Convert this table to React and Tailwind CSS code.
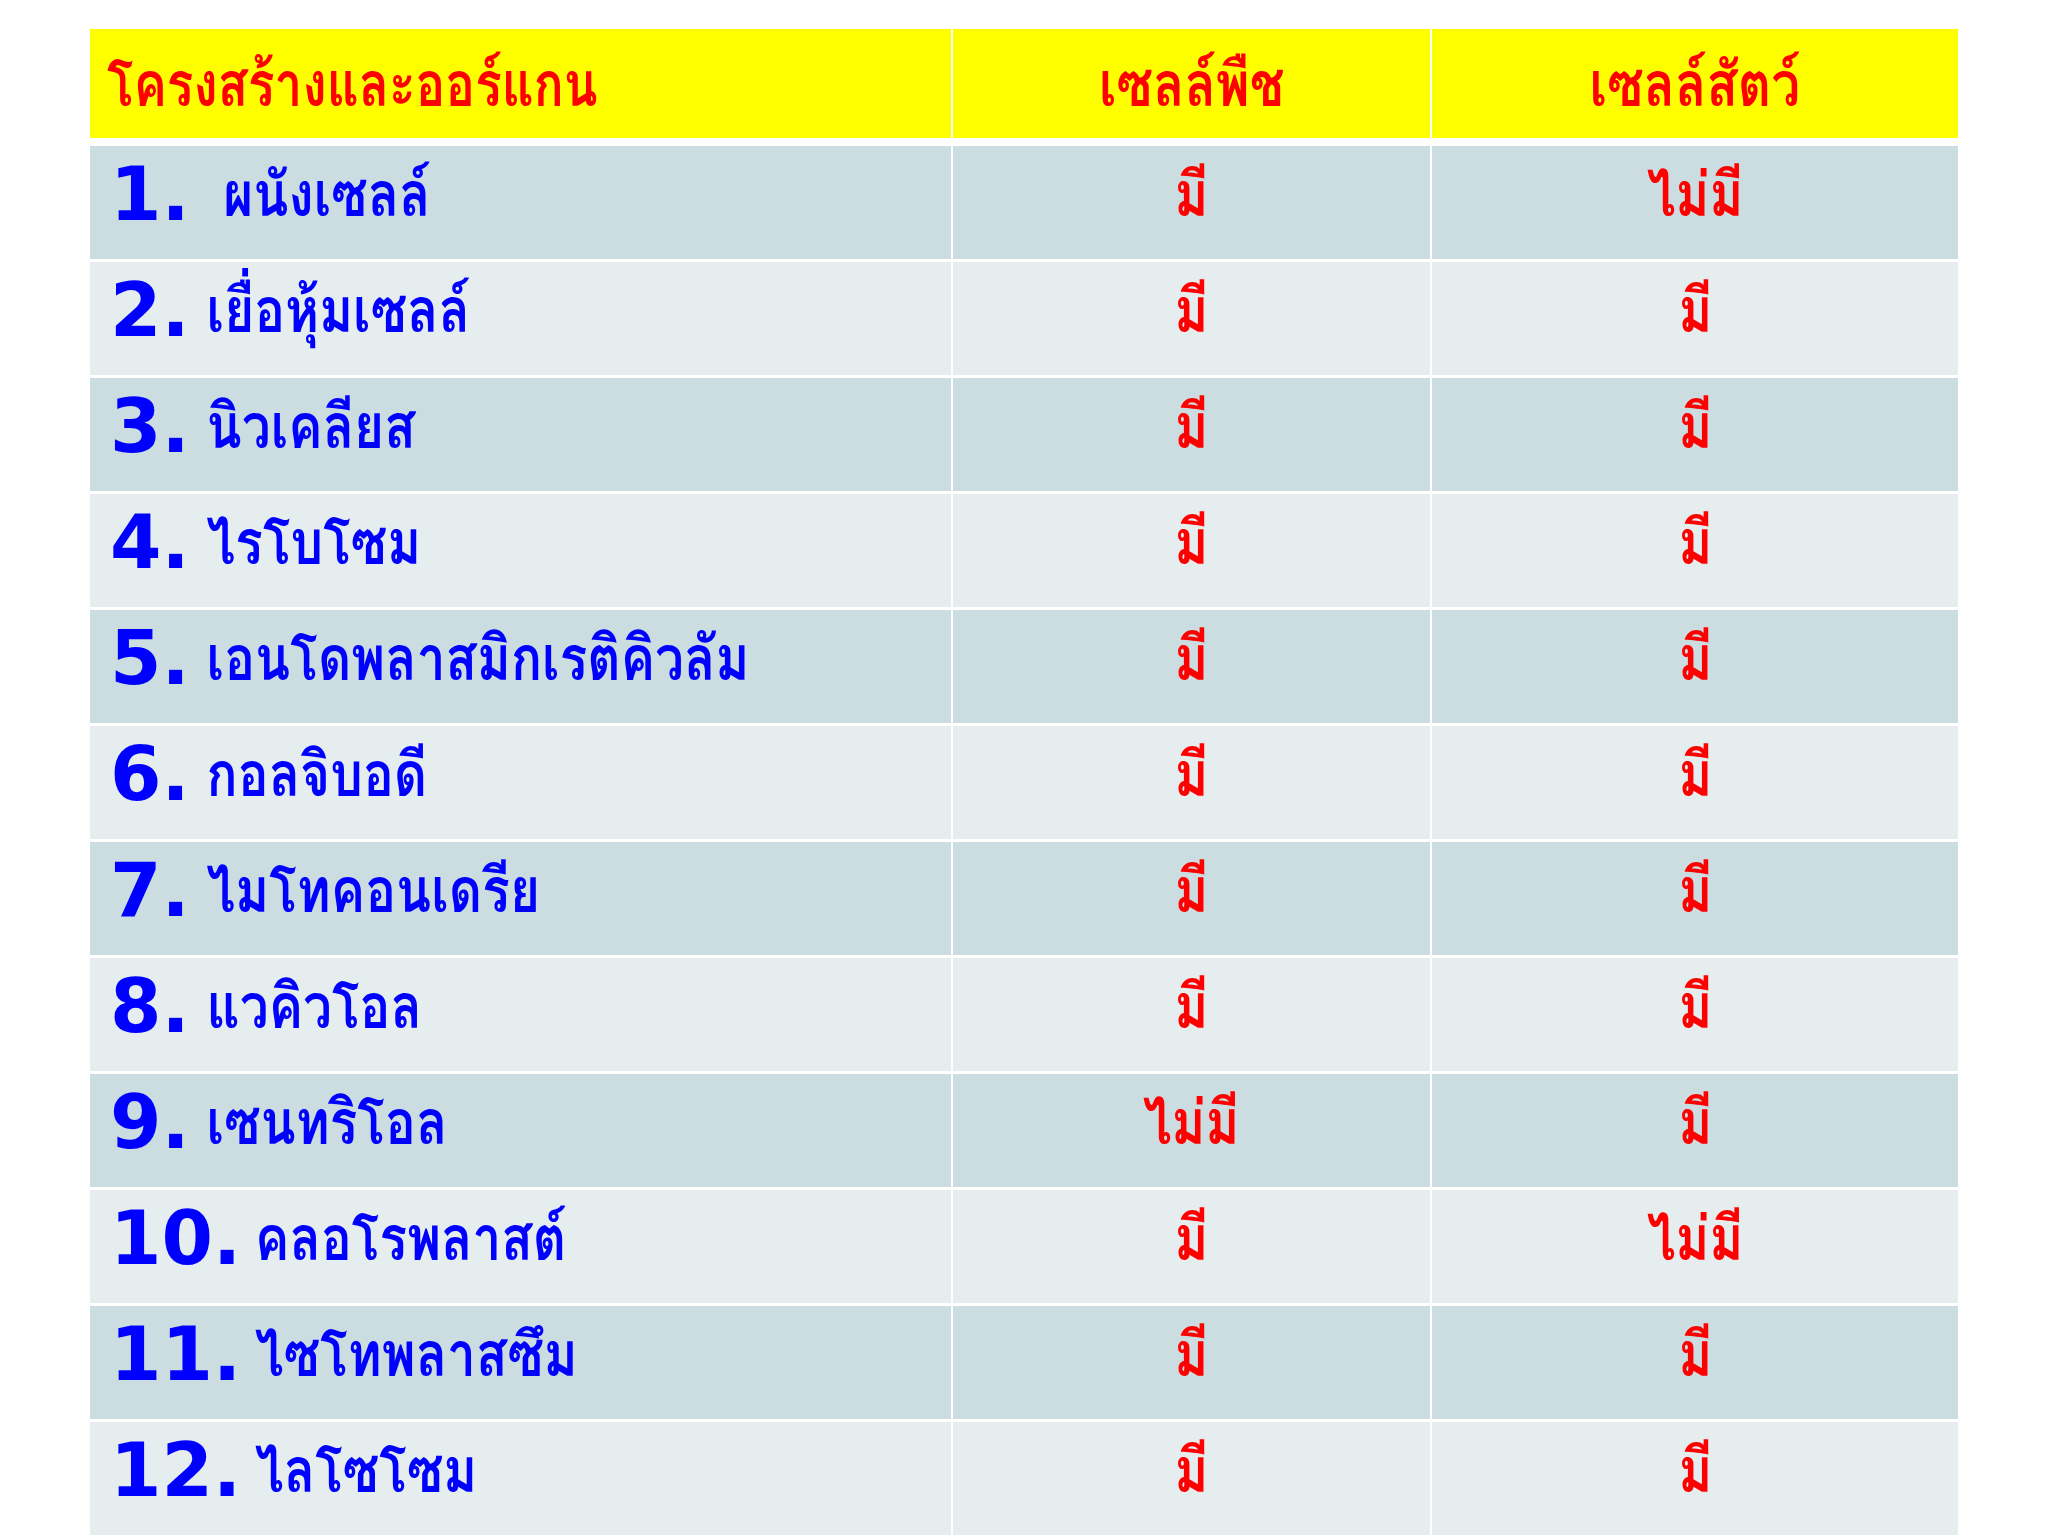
import React from 'react';

const rows = [
  { n: '1.', name: 'ผนังเซลล์', plant: 'มี', animal: 'ไม่มี', gap: 'pl-[40px]' },
  { n: '2.', name: 'เยื่อหุ้มเซลล์', plant: 'มี', animal: 'มี' },
  { n: '3.', name: 'นิวเคลียส', plant: 'มี', animal: 'มี' },
  { n: '4.', name: 'ไรโบโซม', plant: 'มี', animal: 'มี' },
  { n: '5.', name: 'เอนโดพลาสมิกเรติคิวลัม', plant: 'มี', animal: 'มี' },
  { n: '6.', name: 'กอลจิบอดี', plant: 'มี', animal: 'มี' },
  { n: '7.', name: 'ไมโทคอนเดรีย', plant: 'มี', animal: 'มี' },
  { n: '8.', name: 'แวคิวโอล', plant: 'มี', animal: 'มี' },
  { n: '9.', name: 'เซนทริโอล', plant: 'ไม่มี', animal: 'มี' },
  { n: '10.', name: 'คลอโรพลาสต์', plant: 'มี', animal: 'ไม่มี', gap: 'pl-[17px]' },
  { n: '11.', name: 'ไซโทพลาสซึม', plant: 'มี', animal: 'มี', gap: 'pl-[17px]' },
  { n: '12.', name: 'ไลโซโซม', plant: 'มี', animal: 'มี', gap: 'pl-[17px]' },
];

// thai glyphs come from the fallback font, squeeze them to the narrow look of the slide
const thai = "font-['Loma','Garuda','Norasi','Noto_Sans_Thai','DejaVu_Sans',sans-serif] font-bold leading-none inline-block";

export default function App() {
  return (
    <div className="w-[2048px] h-[1536px] bg-white overflow-hidden pt-[29px] pl-[90px]">
      <div className="grid grid-cols-[861px_477px_526px] gap-x-[2px] w-[1868px]">
        {/* header */}
        <div className="h-[109px] bg-[#ffff00] flex items-center pl-[17px]">
          <span className={`${thai} scale-x-[0.8] origin-left text-[#ff0000] text-[62px]`}>โครงสร้างและออร์แกน</span>
        </div>
        <div className="h-[109px] bg-[#ffff00] flex items-center justify-center">
          <span className={`${thai} scale-x-[0.83] text-[#ff0000] text-[62px]`}>เซลล์พืช</span>
        </div>
        <div className="h-[109px] bg-[#ffff00] flex items-center justify-center">
          <span className={`${thai} scale-x-[0.83] text-[#ff0000] text-[62px]`}>เซลล์สัตว์</span>
        </div>
      </div>

      <div className="mt-[8px] grid grid-cols-[861px_477px_526px] gap-x-[2px] gap-y-[3px] w-[1868px]">
        {rows.map((r, i) => {
          const bg = i % 2 === 0 ? 'bg-[#cbdde0]' : 'bg-[#e6edee]';
          return (
            <React.Fragment key={r.n}>
              <div className={`${bg} h-[113px] flex items-center pl-[20px] pb-[18px]`}>
                <span className="font-['DejaVu_Sans',sans-serif] font-bold text-[#0000ff] text-[74px] leading-none">{r.n}</span>
                <span className={`${thai} scale-x-[0.83] origin-left text-[#0000ff] text-[62px] ${r.gap || 'pl-[20px]'}`}>{r.name}</span>
              </div>
              <div className={`${bg} h-[113px] flex items-center justify-center pb-[18px]`}>
                <span className={`${thai} scale-x-[0.83] text-[#ff0000] text-[62px]`}>{r.plant}</span>
              </div>
              <div className={`${bg} h-[113px] flex items-center justify-center pb-[18px]`}>
                <span className={`${thai} scale-x-[0.83] text-[#ff0000] text-[62px]`}>{r.animal}</span>
              </div>
            </React.Fragment>
          );
        })}
      </div>
    </div>
  );
}
